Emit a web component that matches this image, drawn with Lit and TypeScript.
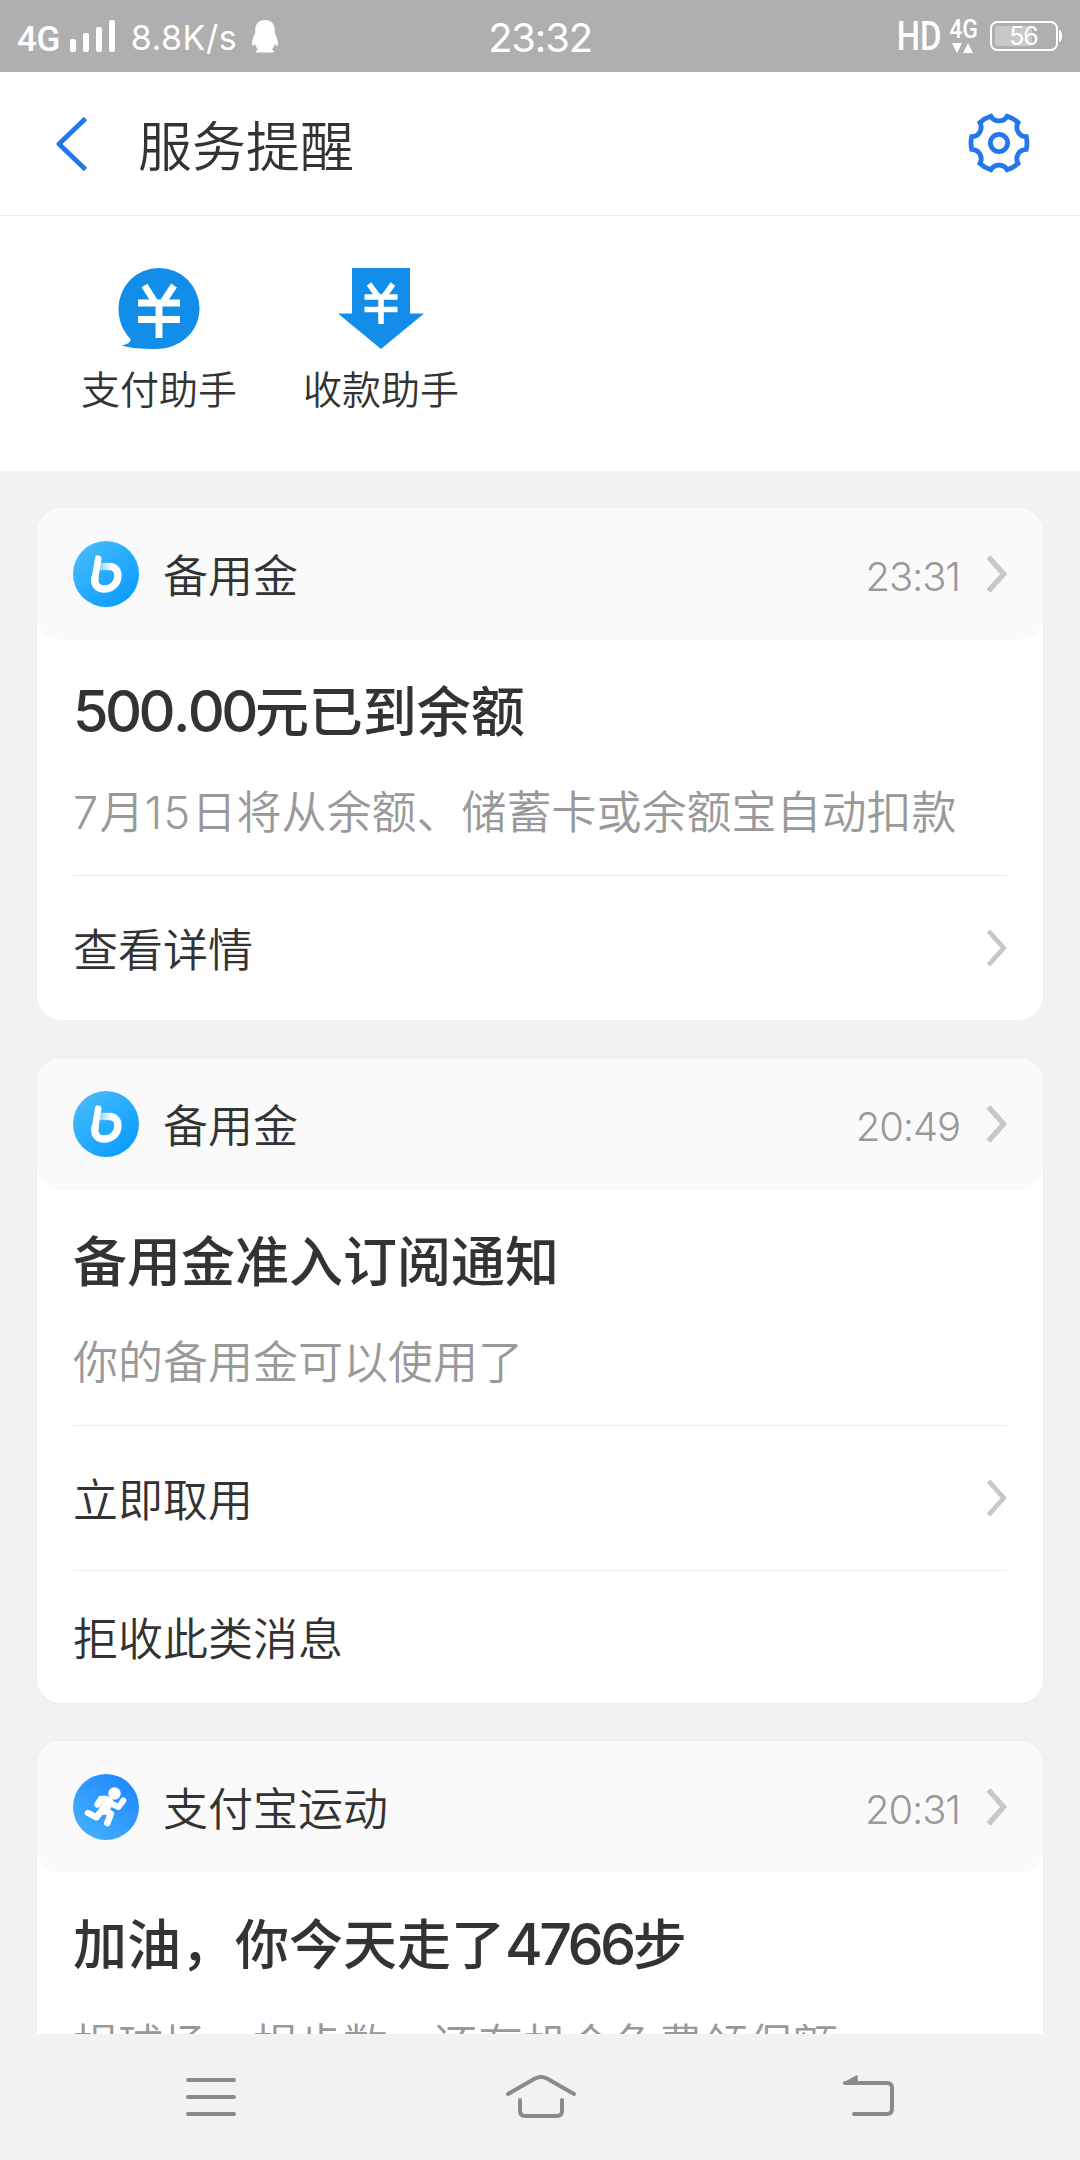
import { LitElement, html, svg, css, nothing } from "lit";
import { customElement, property } from "lit/decorators.js";

type Kind = "b" | "run";
interface Action { label: string; arrow: boolean }
interface Notice { kind: Kind; name: string; time: string; title: string; desc: string; actions: Action[] }

const NOTICES: Notice[] = [
  { kind: "b", name: "备用金", time: "23:31", title: "500.00元已到余额",
    desc: "7月15日将从余额、储蓄卡或余额宝自动扣款",
    actions: [{ label: "查看详情", arrow: true }] },
  { kind: "b", name: "备用金", time: "20:49", title: "备用金准入订阅通知",
    desc: "你的备用金可以使用了",
    actions: [{ label: "立即取用", arrow: true }, { label: "拒收此类消息", arrow: false }] },
  { kind: "run", name: "支付宝运动", time: "20:31", title: "加油，你今天走了4766步",
    desc: "捐球场，捐步数，还有机会免费领保额",
    actions: [] },
];

const bLogo = svg`
  <defs>
    <linearGradient id="bg" x1="0.15" y1="0.1" x2="0.85" y2="0.9">
      <stop offset="0" stop-color="#45b9fd"/><stop offset="1" stop-color="#0a9dff"/>
    </linearGradient>
    <linearGradient id="fade" gradientUnits="userSpaceOnUse" x1="26" y1="0" x2="38" y2="0">
      <stop offset="0" stop-color="#fff" stop-opacity="0.4"/><stop offset="1" stop-color="#fff"/>
    </linearGradient>
  </defs>
  <circle cx="33" cy="33" r="33" fill="url(#bg)"/>
  <path d="M26 25.5H36.5" fill="none" stroke="url(#fade)" stroke-width="7.4"/>
  <path d="M25.2 17.700L22 37" fill="none" stroke="#fff" stroke-width="6.6" stroke-linecap="round"/>
  <path d="M22.2 35L21.900 38C21.200 44 25 48 31 48C39 48 44.600 42.500 44.900 35C45.200 29.500 42 25.500 36.300 25.500"
    fill="none" stroke="#fff" stroke-width="7.4"/>`;

const runLogo = svg`
  <defs>
    <linearGradient id="rg" x1="0.8" y1="0.1" x2="0.2" y2="0.9">
      <stop offset="0" stop-color="#2289ff"/><stop offset="1" stop-color="#43adff"/>
    </linearGradient>
  </defs>
  <circle cx="33" cy="33" r="33" fill="url(#rg)"/>
  <circle cx="41.5" cy="19.500" r="6.200" fill="#fff"/>
  <g fill="none" stroke="#fff" stroke-linecap="round" stroke-linejoin="round">
    <path d="M32.500 27L35.500 28.500L31 36" stroke-width="10"/>
    <path d="M33 25L28 25L24.500 30.500" stroke-width="6.400"/>
    <path d="M37 29L45.500 33L50.300 26.500" stroke-width="6"/>
    <path d="M29 36L23.500 43.300L15 39" stroke-width="6.400"/>
    <path d="M31.500 36L37.800 39.800L34.300 49" stroke-width="6.600"/>
  </g>`;

@customElement("notice-card")
class NoticeCard extends LitElement {
  @property({ attribute: false }) notice!: Notice;

  static styles = css`
    :host { display: block; background: #fff; border-radius: 24px; box-shadow: 0 0 0 1px #eeeeee; }
    .head { height: 132px; box-sizing: border-box; padding: 0 36px; display: flex; align-items: center;
      background: #fafafa; border-radius: 24px; }
    .logo { width: 66px; height: 66px; flex: none; }
    .name { margin-left: 24px; padding-top: 8px; font-size: 45px; line-height: 66px; flex: 1; font-weight: 350; }
    .time { font-family: Inter, Roboto, sans-serif; font-size: 40px; line-height: 66px; color: #999; font-weight: 350; letter-spacing: -1.1px; padding-top: 5px; }
    .arrow { width: 21px; height: 38px; flex: none; }
    .head .arrow { margin-left: 26px; }
    .title { padding: 34px 36px 0; height: 80px; line-height: 80px; font-size: 54px; font-weight: 500; white-space: nowrap; }
    .num { font-family: Inter, Roboto, sans-serif; font-size: 57.5px; letter-spacing: -3.6px; line-height: 1; }
    .dot { margin: 0 1px; }
    .desc { padding: 27px 36px 0; height: 66px; line-height: 66px; font-size: 45px; color: #999; font-weight: 350; white-space: nowrap; }
    .digit { font-family: Inter, Roboto, sans-serif; font-weight: 350; line-height: 1; letter-spacing: 1.3px; }
    .gap { height: 28px; }
    .row { margin: 0 36px; border-top: 1px solid #ebebeb; height: 144px; display: flex; align-items: center;
      justify-content: space-between; font-size: 45px; font-weight: 350; }
    .row span { padding-bottom: 2px; }
    .row.short { height: 132px; }
  `;

  render() {
    const n = this.notice;
    const arrow = (w: number, c: string) => html`<svg class="arrow" viewBox="0 0 21 38">
      <path d="M2.500 2L17.700 19L2.500 36" fill="none" stroke=${c} stroke-width=${w}/></svg>`;
    const num = (p: string) => p.split(/(\.)/).map((s) => s === "." ? html`<span class="dot">.</span>` : s);
    return html`
      <div class="head">
        <svg class="logo" viewBox="0 0 66 66">${n.kind === "b" ? bLogo : runLogo}</svg>
        <div class="name">${n.name}</div>
        <div class="time">${n.time}</div>
        ${arrow(5.4, "#c7c7cc")}
      </div>
      <div class="title">${n.title.split(/([\d.]+)/).map((p) => /^\d/.test(p) ? html`<span class="num">${num(p)}</span>` : p)}</div>
      <div class="desc">${n.desc.split(/(\d+)/).map((p) => /^\d/.test(p) ? html`<span class="digit">${p}</span>` : p)}</div>
      <div class="gap"></div>
      ${n.actions.map((a) => html`<div class="row ${a.arrow ? "" : "short"}">
        <span>${a.label}</span>${a.arrow ? arrow(4.8, "#c8c8c8") : nothing}</div>`)}
    `;
  }
}

function gearPath(): string {
  // Six scalloped notches around a circle, first one at the top.
  const R = 28, half = (17 * Math.PI) / 180;
  const pt = (a: number) => `${(30 + R * Math.sin(a)).toFixed(2)} ${(30 - R * Math.cos(a)).toFixed(2)}`;
  let d = "";
  for (let i = 0; i < 6; i++) {
    const c = (i * Math.PI) / 3;
    d += `${i ? "L" : "M"}${pt(c - half)}A9.500 9.500 0 0 0 ${pt(c + half)}`;
    d += `A${R} ${R} 0 0 1 ${pt(c + Math.PI / 3 - half)}`;
  }
  return d + "Z";
}

@customElement("app-root")
class AppRoot extends LitElement {
  static styles = css`
    :host { display: flex; flex-direction: column; width: 1080px; height: 2160px; overflow: hidden;
      background: #f2f2f2; color: #333; font-family: Roboto, "Noto Sans CJK SC", sans-serif; }
    svg { display: block; flex: none; }
    .status { height: 72px; flex: none; background: #afafaf; color: #fff; display: grid;
      grid-template-columns: 1fr auto 1fr; align-items: center; padding: 0 17px 0 17px; box-sizing: border-box; }
    .left, .right { display: flex; align-items: center; }
    .right { justify-content: flex-end; }
    .net { font-size: 35px; line-height: 40px; padding-top: 7px; font-weight: 500; letter-spacing: -0.5px; }
    .bars { margin-left: 10px; }
    .speed { font-family: Inter, Roboto, sans-serif; font-size: 34px; line-height: 42px; margin-left: 15px; padding-top: 3px; width: 106px; white-space: nowrap; letter-spacing: 0.5px; }
    .qq { margin-left: 14px; }
    .clock { font-family: Inter, Roboto, sans-serif; font-size: 40px; line-height: 48px; padding-top: 4px; letter-spacing: -1.2px; }
    .hd { font-size: 40px; line-height: 48px; padding-top: 2px; font-weight: 500; transform: scaleX(0.82); transform-origin: right; margin-right: -2px; }
    .small { display: flex; flex-direction: column; align-items: center; margin: 0 11px 0 8px; font-size: 25px; line-height: 24px; font-weight: 500; }
    .small b { font-weight: 500; line-height: 22px; transform: scaleX(0.92); }
    .tri { margin-top: 2px; }
    .battery { position: relative; display: block; width: 73px; height: 30px; }
    .pct { position: absolute; left: 0; top: 1px; width: 67px; text-align: center; font-family: Inter, Roboto, sans-serif; font-size: 25px; line-height: 29px; letter-spacing: -1px; }
    .bar { height: 143px; flex: none; background: #fff; border-bottom: 1px solid #ebebeb; display: flex; align-items: center; padding: 0 50px 0 55px; }
    .heading { flex: 1; margin-left: 49px; font-size: 54px; line-height: 80px; padding-top: 10px; font-weight: 350; }
    .gear { margin-bottom: 2px; }
    .helpers { height: 255px; flex: none; background: #fff; display: flex; padding: 0 0 0 48px; }
    .helper { width: 222px; display: flex; flex-direction: column; align-items: center; padding-top: 52px; box-sizing: border-box; }
    .label { font-size: 39px; line-height: 58px; margin-top: 12px; font-weight: 350; }
    .feed { flex: 1; min-height: 0; overflow: hidden; padding: 37px 37px 0; display: flex; flex-direction: column; gap: 38px; }
    .feed notice-card { flex: none; }
    .nav { height: 126px; flex: none; background: #f2f2f2; display: block; }
  `;

  render() {
    return html`
      <div class="status">
        <div class="left">
          <span class="net">4G</span>
          <svg class="bars" width="46" height="32" viewBox="0 0 46 32" fill="#fff">
            <rect x="0" y="19" width="6" height="13" rx="2"/><rect x="13" y="13" width="6" height="19" rx="2"/>
            <rect x="26" y="7" width="6" height="25" rx="2"/><rect x="39" y="0" width="6" height="32" rx="2"/>
          </svg>
          <span class="speed">8.8K/s</span>
          <svg class="qq" width="28" height="33" viewBox="0 0 28 33" fill="#fff">
            <path d="M14 0C20 0 23.800 4 23.800 10V13C26 17 27.600 22 26.600 26C25.600 26.500 24.600 25 24 23.800C23.400 26.200 22.300 28 20.800 29.500C22.300 30 23.300 31 23 32.500H5C4.700 31 5.700 30 7.200 29.500C5.700 28 4.600 26.200 4 23.800C3.400 25 2.400 26.500 1.400 26C0.400 22 2 17 4.200 13V10C4.200 4 8 0 14 0Z"/>
          </svg>
        </div>
        <div class="clock">23:32</div>
        <div class="right">
          <span class="hd">HD</span>
          <span class="small"><b>4G</b>
            <svg class="tri" width="22" height="10" viewBox="0 0 22 10" fill="#fff"><path d="M0 0H10L5 10ZM11 10H21L16 0Z"/></svg>
          </span>
          <span class="battery">
            <svg width="73" height="30" viewBox="0 0 73 30">
              <rect x="1" y="1" width="66" height="28" rx="6.500" fill="none" stroke="#fff" stroke-width="2"/>
              <rect x="5" y="5" width="37" height="20" rx="3" fill="#c8c8c8"/>
              <path d="M69 9C71 9.500 72 11 72 15S71 20.500 69 21Z" fill="#fff"/>
            </svg>
            <span class="pct">56</span>
          </span>
        </div>
      </div>
      <div class="bar">
        <svg width="34" height="54" viewBox="0 0 34 54"><path d="M30.500 1.500L4 27L30.500 52.500" fill="none" stroke="#2377ee" stroke-width="4.800" stroke-linejoin="round"/></svg>
        <div class="heading">服务提醒</div>
        <svg class="gear" width="62" height="60" viewBox="-1 0 62 60" fill="none" stroke="#2377ee" stroke-width="4.800">
          <path d=${gearPath()}/><circle cx="30" cy="30" r="8.600"/>
        </svg>
      </div>
      <div class="helpers">
        <div class="helper">
          <svg width="82" height="82" viewBox="0 0 82 82">
            <path d="M41 0A40.500 40.500 0 0 1 81.500 40.500C81.500 64 62 81 38 81C24 81 11 80 3.500 77.500C8 76.500 13 75 12.500 71C5 63 0.500 53 0.500 40.500A40.500 40.500 0 0 1 41 0Z" fill="#128eea"/>
            <path d="M26.500 17.500L37.500 35M56 17.500L44.500 35M20 35H62M20 51.500H62M41 33V70" fill="none" stroke="#fff" stroke-width="6.900"/>
          </svg>
          <span class="label">支付助手</span>
        </div>
        <div class="helper">
          <svg width="86" height="82" viewBox="0 0 86 82">
            <path d="M14 0H72V45.500H86L43 81L0 45.500H14Z" fill="#128eea"/>
            <path d="M31 16L40.500 29M55 16L45.500 29M26.500 29H59.500M26.500 41.500H59.500M43 27V56" fill="none" stroke="#fff" stroke-width="5.600"/>
          </svg>
          <span class="label">收款助手</span>
        </div>
      </div>
      <div class="feed">${NOTICES.map((n) => html`<notice-card .notice=${n}></notice-card>`)}</div>
      <svg class="nav" width="1080" height="126" viewBox="0 2034 1080 126" fill="none" stroke="#8a8a8a" stroke-width="4" stroke-linecap="round" stroke-linejoin="round">
        <path d="M188 2080H234M188 2097H234M188 2114H234"/>
        <path d="M508 2094L535 2078.500Q541 2075.500 547 2078.500L574 2094M520 2100V2111Q520 2116 525 2116H557Q562 2116 562 2111V2100"/>
        <path d="M854 2114H887Q892 2114 892 2109V2088Q892 2083 887 2083H845"/>
        <path d="M844 2083L857 2076V2083Z" fill="#8a8a8a" stroke-width="1.500"/>
      </svg>
    `;
  }
}
